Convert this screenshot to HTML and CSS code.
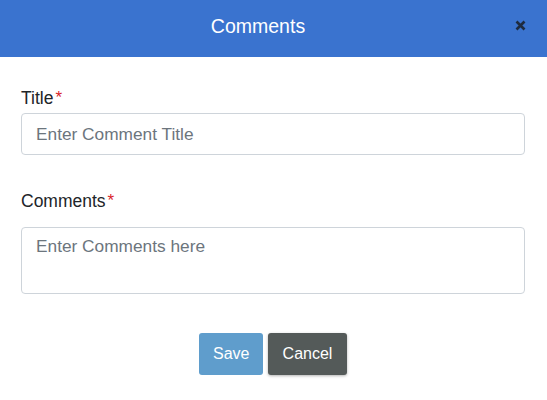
FILE: index.html
```html
<!DOCTYPE html>
<html lang="en">
<head>
<meta charset="utf-8">
<title>Comments</title>
<link rel="stylesheet" href="styles.css">
</head>
<body>
<div class="modal">
  <header class="modal-header">
    <h1 class="modal-title">Comments</h1>
    <button class="close" type="button" aria-label="Close">
      <svg width="11" height="11" viewBox="0 0 11 11" aria-hidden="true"><path d="M1.5 1.5 L9.5 9.5 M9.5 1.5 L1.5 9.5" stroke="#1c2430" stroke-width="2.6" stroke-linecap="butt"/></svg>
    </button>
  </header>
  <form class="modal-body">
    <div class="field field-title">
      <label class="label">Title<span class="req">*</span></label>
      <input class="control" type="text" placeholder="Enter Comment Title">
    </div>
    <div class="field field-comments">
      <label class="label">Comments<span class="req">*</span></label>
      <textarea class="control area" placeholder="Enter Comments here"></textarea>
    </div>
    <div class="actions">
      <button class="btn btn-save" type="button">Save</button>
      <button class="btn btn-cancel" type="button">Cancel</button>
    </div>
  </form>
</div>
</body>
</html>
```
FILE: styles.css
```css
* { box-sizing: border-box; }
html, body { margin: 0; padding: 0; background: #fff; }
body { font-family: "Liberation Sans", Arial, sans-serif; color: #212529; }

.modal { width: 547px; height: 400px; background: #fff; }

.modal-header {
  height: 57px;
  background: #3a73cf;
  display: flex;
  align-items: center;
  justify-content: center;
  padding-right: 31px;
  position: relative;
}
.modal-title {
  margin: 0;
  font-size: 19.5px;
  font-weight: normal;
  color: #fff;
  line-height: 1;
  padding-bottom: 3px;
}
.close {
  position: absolute;
  right: 21px;
  top: 20px;
  width: 11px;
  height: 11px;
  padding: 0;
  border: 0;
  background: none;
  display: flex;
  opacity: 0.9;
}

.modal-body {
  padding: 29px 22px 0 21px;
  display: flex;
  flex-direction: column;
}
.field { display: flex; flex-direction: column; }
.label {
  display: block;
  height: 24px;
  font-size: 17.5px;
  line-height: 24px;
  color: #212529;
}
.req { color: #d9242c; margin-left: 2px; position: relative; top: -1px; font-size: 17px; line-height: 1; }

.field-title .label { margin-bottom: 3px; }
.field-comments { margin-top: 34px; }
.field-comments .label { margin-bottom: 14px; }

.control {
  width: 100%;
  height: 42px;
  border: 1px solid #ced4da;
  border-radius: 4px;
  padding: 0 14px;
  font-family: "Liberation Sans", Arial, sans-serif;
  font-size: 17.3px;
  color: #495057;
  background: #fff;
  outline: none;
}
.control::placeholder { color: #6c757d; opacity: 1; }
.area {
  height: 67px;
  resize: none;
  padding: 6px 14px;
  line-height: 1.5;
  display: block;
}

.actions {
  margin-top: 39px;
  display: flex;
  justify-content: center;
  gap: 5px;
}
.btn {
  height: 42px;
  border: 0;
  border-radius: 3px;
  font-family: "Liberation Sans", Arial, sans-serif;
  font-size: 16px;
  color: #fff;
  padding: 0 14px;
}
.btn-save { background: #5f9dcc; width: 64px; }
.btn-cancel { background: #545a59; width: 79px; box-shadow: 0 1px 3px rgba(0,0,0,0.3); }
```
